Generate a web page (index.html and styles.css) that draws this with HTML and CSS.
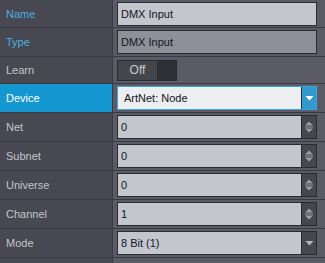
FILE: index.html
```
<!DOCTYPE html>
<html>
<head>
<meta charset="utf-8">
<link rel="stylesheet" href="styles.css">
</head>
<body>
<div class="grid">
  <div class="label blue h27">Name</div>
  <div class="val h27"><div class="field">DMX Input</div></div>

  <div class="label blue">Type</div>
  <div class="val"><div class="field disabled">DMX Input</div></div>

  <div class="label h26">Learn</div>
  <div class="val h26"><div class="toggle"><span class="off">Off</span><span class="knob"></span></div></div>

  <div class="label selected">Device</div>
  <div class="val"><div class="field active"><span class="txt dev">ArtNet: Node</span><span class="btn bluebtn"><svg width="9" height="6" viewBox="0 0 9 6"><path d="M0.5 1 H8.5 L4.5 5.5 Z" fill="#ffffff"/></svg></span></div></div>

  <div class="label">Net</div>
  <div class="val"><div class="field spin"><span class="txt">0</span><span class="btn"><svg width="12" height="14" viewBox="0 0 12 14"><path d="M2 5.5 L6 1.5 L10 5.5 Z M2 8.5 L10 8.5 L6 12.5 Z" fill="#9a9ca4"/><rect x="2" y="6.5" width="8" height="1" fill="#9a9ca4"/></svg></span></div></div>

  <div class="label">Subnet</div>
  <div class="val"><div class="field spin"><span class="txt">0</span><span class="btn"><svg width="12" height="14" viewBox="0 0 12 14"><path d="M2 5.5 L6 1.5 L10 5.5 Z M2 8.5 L10 8.5 L6 12.5 Z" fill="#9a9ca4"/><rect x="2" y="6.5" width="8" height="1" fill="#9a9ca4"/></svg></span></div></div>

  <div class="label">Universe</div>
  <div class="val"><div class="field spin"><span class="txt">0</span><span class="btn"><svg width="12" height="14" viewBox="0 0 12 14"><path d="M2 5.5 L6 1.5 L10 5.5 Z M2 8.5 L10 8.5 L6 12.5 Z" fill="#9a9ca4"/><rect x="2" y="6.5" width="8" height="1" fill="#9a9ca4"/></svg></span></div></div>

  <div class="label">Channel</div>
  <div class="val"><div class="field spin"><span class="txt">1</span><span class="btn"><svg width="12" height="14" viewBox="0 0 12 14"><path d="M2 5.5 L6 1.5 L10 5.5 Z M2 8.5 L10 8.5 L6 12.5 Z" fill="#9a9ca4"/><rect x="2" y="6.5" width="8" height="1" fill="#9a9ca4"/></svg></span></div></div>

  <div class="label">Mode</div>
  <div class="val"><div class="field spin"><span class="txt">8 Bit (1)</span><span class="btn"><svg width="9" height="6" viewBox="0 0 9 6"><path d="M0.5 1 H8.5 L4.5 5.5 Z" fill="#b4b6bc"/></svg></span></div></div>

  <div class="label"></div>
  <div class="val"></div>
</div>
</body>
</html>
```
FILE: styles.css
```
html, body {
  margin: 0;
  padding: 0;
  background: #5a5b66;
  overflow: hidden;
}
body {
  width: 325px;
  height: 263px;
  font-family: "Liberation Sans", Arial, sans-serif;
  font-size: 11px;
}
.grid {
  display: grid;
  grid-template-columns: 113px 212px;
}
.label {
  height: 28px;
  box-sizing: border-box;
  background: #474852;
  border-right: 1px solid #393a42;
  border-bottom: 1px solid #393a42;
  color: #c3c5cb;
  padding-left: 6px;
  display: flex;
  align-items: center;
}
.val {
  height: 29px;
  box-sizing: border-box;
  background: #5a5b66;
  border-bottom: 1px solid #393a42;
  padding: 0 8px 0 4px;
  display: flex;
  align-items: center;
}
.label { height: 29px; }
.h27 { height: 28px; }
.h26 { height: 27px; }
.label.blue { color: #4eaee0; }
.label.selected {
  background: #1597d1;
  color: #ffffff;
  border-bottom-color: #393a42;
}
.field {
  box-sizing: border-box;
  width: 200px;
  height: 24px;
  background: #c4c6cd;
  border: 1px solid #2a2b31;
  color: #14141e;
  padding-left: 3px;
  display: flex;
  align-items: center;
}
.field.disabled { background: #8e9099; }
.field.active {
  background: #eceef1;
  border-color: #3ca6da;
}
.txt { flex: 1; }
.dev { padding-left: 3px; }
.btn {
  width: 14px;
  align-self: stretch;
  background: #45464e;
  border-left: 1px solid #2a2b31;
  display: flex;
  align-items: center;
  justify-content: center;
}
.bluebtn {
  background: #3199cc;
  border-left-color: #2a2b31;
}
.toggle {
  box-sizing: border-box;
  width: 60px;
  height: 21px;
  border: 1px solid #2a2b30;
  background: #2f3035;
  display: flex;
}
.off {
  width: 39px;
  background: #44464e;
  color: #c8cad0;
  font-size: 12px;
  display: flex;
  align-items: center;
  justify-content: center;
}
.knob { flex: 1; }
```
